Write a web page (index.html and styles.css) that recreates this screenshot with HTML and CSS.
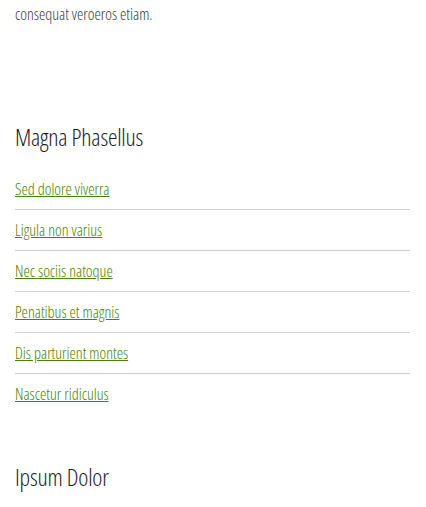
FILE: index.html
```html
<!DOCTYPE html>
<html>
<head>
<meta charset="utf-8">
<link rel="stylesheet" href="styles.css">
</head>
<body>
<p class="tail">consequat veroeros etiam.</p>
<section class="box">
  <h2 class="title">Magna Phasellus</h2>
  <ul class="links">
    <li><a href="#">Sed dolore viverra</a></li>
    <li><a href="#">Ligula non varius</a></li>
    <li><a href="#">Nec sociis natoque</a></li>
    <li><a href="#">Penatibus et magnis</a></li>
    <li><a href="#">Dis parturient montes</a></li>
    <li><a href="#">Nascetur ridiculus</a></li>
  </ul>
</section>
<section class="box">
  <h2 class="title">Ipsum Dolor</h2>
</section>
</body>
</html>
```
FILE: styles.css
```css
html, body {
  margin: 0;
  padding: 0;
  background: #fff;
}
body {
  font-family: "Open Sans", sans-serif;
  font-stretch: 75%;
  font-weight: 300;
  color: #3a3a3a;
  font-size: 16px;
  padding: 0 16px 0 15px;
}
.tail {
  margin: 0;
  padding-top: 4px;
  line-height: 20px;
}
.box {
  margin-top: 98px;
}
.box + .box {
  margin-top: 48px;
}
.title {
  margin: 0;
  font-weight: 300;
  font-size: 24px;
  line-height: 30px;
  letter-spacing: -0.2px;
  color: #1e1e1e;
}
.links {
  list-style: none;
  margin: 27px 0 0;
  padding: 0;
}
.links li {
  border-top: 1px solid #d0d0d0;
  padding: 10px 0;
  line-height: 20px;
}
.links li:first-child {
  border-top: none;
  padding-top: 0;
}
.links a {
  color: #468300;
  font-size: 16px;
}
```
